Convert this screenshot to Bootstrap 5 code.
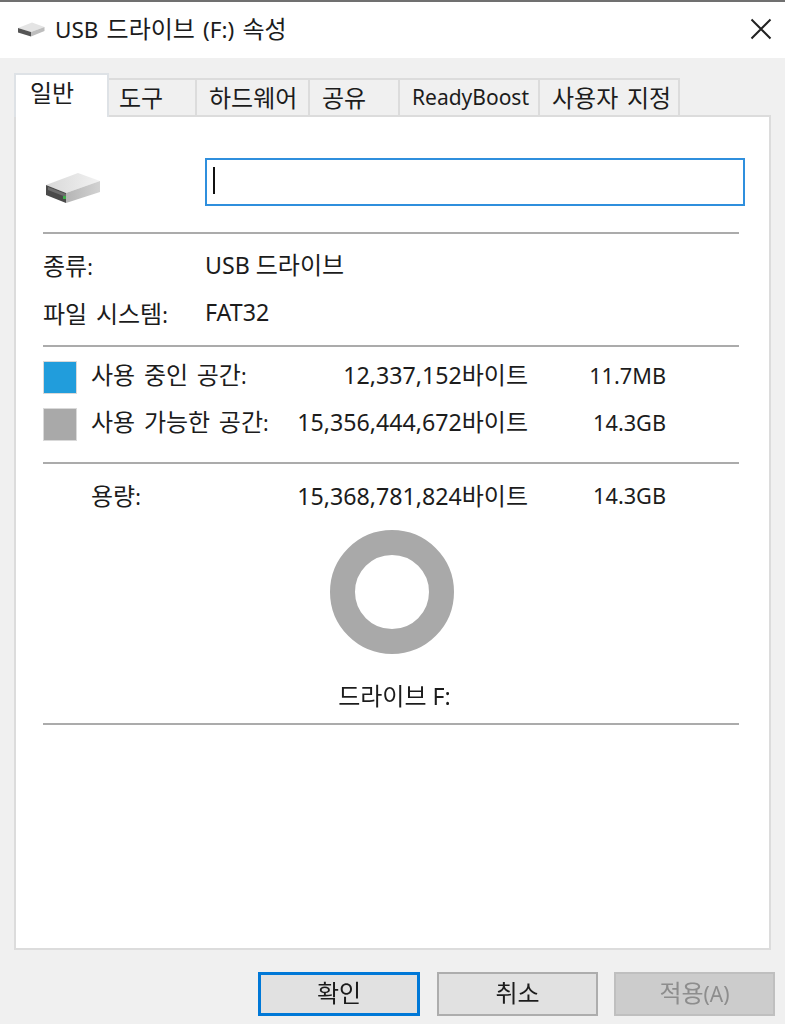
<!DOCTYPE html>
<html lang="ko">
<head>
<meta charset="utf-8">
<title>USB 드라이브 (F:) 속성</title>
<link rel="stylesheet" href="https://cdn.jsdelivr.net/npm/bootstrap@5.3.0/dist/css/bootstrap.min.css">
<style>
html,body{height:100%;margin:0}
body{background:#f0f0f0;color:#1c1c1c;font-family:"Noto Sans","Noto Sans CJK KR",sans-serif;font-size:21px;line-height:1;overflow:hidden}
.ko{font-family:"Noto Sans CJK KR","Noto Sans",sans-serif;font-size:24px;word-spacing:2px;line-height:1}
.numv{font-size:23.2px}
.dlg{height:1024px;filter:blur(.5px)}
.titlebar{height:58px;background:#fff;border-top:2px solid #707070;padding:0 0 2px 17px}
.titlebar .ttl{margin-left:10px;font-size:22.5px;word-spacing:2.3px}
.closex{margin-right:13px}
.tabstrip{padding:15px 0 0 14px;height:57px;align-items:flex-end;flex-wrap:nowrap;border:0}
.tabstrip .nav-link{height:37px;margin:0;padding:0 0 2px 12px;background:#f0f0f0;border:2px solid #dcdcdc;border-bottom:0;border-left-width:0;border-radius:0;color:#1c1c1c;font-size:21px;display:flex;align-items:center;white-space:nowrap}
.tabstrip .nav-link.active{height:44px;background:#fff;border-left-width:2px;padding-left:14px;padding-bottom:8px;margin-bottom:-2px;position:relative;z-index:1;color:#1c1c1c}
.t1{width:95px}.t2{width:88px}.t3{width:113px}.t4{width:90px}.t5{width:140px}.t6{width:140px}
.tabstrip .nav-link.t2{padding-left:10px}
.tabstrip .nav-link.t5{padding-bottom:0}
.sheet{height:835px;margin:0 14px;background:#fff;border:2px solid #dcdcdc;padding:41px 30px 0 27px}
.headrow{height:48px}
.iconcol{width:162px;padding:14px 0 0 2px}
.namebox{height:48px;flex:1;margin-right:-6px;border:2px solid #2f8fdd;border-radius:0;background:#fff;padding:0;display:flex;align-items:flex-start}
.caret{width:2px;height:27px;margin:7px 0 0 6px;background:#111}
.rule{margin:0;border:0;border-top:2px solid #ababab;opacity:1}
.r1{margin-top:26px}.r2{margin-top:8px}.r3{margin-top:21px}.r4{margin-top:10px}
.inforow{height:48px}
.lblcol{width:162px}
.first{margin-top:7px}
.usage{height:33px}
.usage .swatch{width:34px;height:33px;margin-right:14px;border:1px solid #d9d9d9;flex:none}
.sw-b{background:#219ddc}.sw-g{background:#a9a9a9}
.usage .nm{width:200px;margin-bottom:6px}
.usage .by{width:237px;text-align:right;margin-bottom:6px;white-space:nowrap}
.usage .sz{width:138px;text-align:right;margin-bottom:4px;font-size:21.7px}
.u1{margin-top:14px}.u2{margin-top:14px}
.capa{height:32px;margin-top:16px;padding:0 0 1px 48px}
.capa .nm{width:200px}.capa .by{width:237px;text-align:right;white-space:nowrap}.capa .sz{width:138px;text-align:right;font-size:21.7px}
.donutwrap{margin-top:18px;height:124px;padding-left:2px}
.drv{margin-top:27px;height:32px;padding:0 0 3px 7px}
.foot{height:74px;padding:22px 10px 8px 0;gap:0}
.winbtn{height:44px;width:161px;padding:0 0 3px;border-radius:0;background:#e1e1e1;border:2px solid #adadad;color:#1c1c1c;font-size:21px;line-height:1;font-family:inherit}
.winbtn.def{border:3px solid #0078d7;width:162px}
.winbtn.dis,.winbtn:disabled{background:#cccccc;border-color:#bfbfbf;color:#8d8d8d;opacity:1}
.mr1{margin-right:17px}.mr2{margin-right:16px}
</style>
</head>
<body>
<div class="dlg d-flex flex-column">
  <div class="titlebar d-flex align-items-center justify-content-between">
    <div class="d-flex align-items-center">
      <svg width="28" height="16" viewBox="0 0 56 32"><polygon points="2,14 30,3 55,12 28,22" fill="#e4e4e4"/><polygon points="2,14 28,22 28,31 2,23" fill="#555"/><polygon points="28,22 55,12 55,20 28,31" fill="#bdbdbd"/></svg>
      <span class="ttl">USB <span class="ko">드라이브</span> (F:) <span class="ko">속성</span></span>
    </div>
    <svg class="closex" width="22" height="22" viewBox="0 0 22 22"><path d="M1.5 1.5 20.5 20.5M20.5 1.5 1.5 20.5" stroke="#222" stroke-width="2" fill="none"/></svg>
  </div>
  <ul class="nav nav-tabs tabstrip">
    <li class="nav-item"><a class="nav-link active t1" href="#"><span class="ko">일반</span></a></li>
    <li class="nav-item"><a class="nav-link t2" href="#"><span class="ko">도구</span></a></li>
    <li class="nav-item"><a class="nav-link t3" href="#"><span class="ko">하드웨어</span></a></li>
    <li class="nav-item"><a class="nav-link t4" href="#"><span class="ko">공유</span></a></li>
    <li class="nav-item"><a class="nav-link t5" href="#">ReadyBoost</a></li>
    <li class="nav-item"><a class="nav-link t6" href="#"><span class="ko">사용자 지정</span></a></li>
  </ul>
  <div class="sheet">
    <div class="headrow d-flex">
      <div class="iconcol">
        <svg width="56" height="32" viewBox="0 0 56 32">
          <defs><linearGradient id="dt" x1="0" y1="0" x2="1" y2="0"><stop offset="0" stop-color="#d8d8d8"/><stop offset="1" stop-color="#f2f2f2"/></linearGradient><linearGradient id="ds" x1="0" y1="0" x2="1" y2="0"><stop offset="0" stop-color="#b5b5b5"/><stop offset="1" stop-color="#d2d2d2"/></linearGradient></defs>
          <polygon points="1,13 33,1 55,9 21,21" fill="url(#dt)"/>
          <polygon points="1,13 21,21 21,31 1,23" fill="#4a4a4a"/>
          <polygon points="3,15 21,22 21,25 3,18" fill="#6d6d6d"/>
          <polygon points="21,21 55,9 55,20 21,31" fill="url(#ds)"/>
          <rect x="18" y="24" width="3" height="3" fill="#3fae49"/>
        </svg>
      </div>
      <div class="namebox" role="textbox"><span class="caret"></span></div>
    </div>
    <hr class="rule r1">
    <div class="inforow first d-flex align-items-center"><div class="lblcol"><span class="ko">종류</span>:</div><div class="numv">USB <span class="ko">드라이브</span></div></div>
    <div class="inforow d-flex align-items-center"><div class="lblcol"><span class="ko">파일 시스템</span>:</div><div class="numv">FAT32</div></div>
    <hr class="rule r2">
    <div class="usage u1 d-flex align-items-center"><span class="swatch sw-b"></span><span class="nm"><span class="ko">사용 중인 공간</span>:</span><span class="by"><span class="numv">12,337,152</span><span class="ko">바이트</span></span><span class="sz">11.7MB</span></div>
    <div class="usage u2 d-flex align-items-center"><span class="swatch sw-g"></span><span class="nm"><span class="ko">사용 가능한 공간</span>:</span><span class="by"><span class="numv">15,356,444,672</span><span class="ko">바이트</span></span><span class="sz">14.3GB</span></div>
    <hr class="rule r3">
    <div class="capa d-flex align-items-center"><span class="nm"><span class="ko">용량</span>:</span><span class="by"><span class="numv">15,368,781,824</span><span class="ko">바이트</span></span><span class="sz">14.3GB</span></div>
    <div class="donutwrap d-flex justify-content-center">
      <svg width="124" height="124" viewBox="0 0 124 124"><circle cx="62" cy="62" r="49.5" fill="none" stroke="#a9a9a9" stroke-width="25"/></svg>
    </div>
    <div class="drv d-flex align-items-center justify-content-center"><span class="numv"><span class="ko">드라이브</span> F:</span></div>
    <hr class="rule r4">
  </div>
  <div class="foot d-flex justify-content-end">
    <button type="button" class="btn winbtn def mr1"><span class="ko">확인</span></button>
    <button type="button" class="btn winbtn mr2"><span class="ko">취소</span></button>
    <button type="button" class="btn winbtn dis" disabled><span class="ko">적용</span>(A)</button>
  </div>
</div>
<script src="https://cdn.jsdelivr.net/npm/bootstrap@5.3.0/dist/js/bootstrap.bundle.min.js"></script>
</body>
</html>
